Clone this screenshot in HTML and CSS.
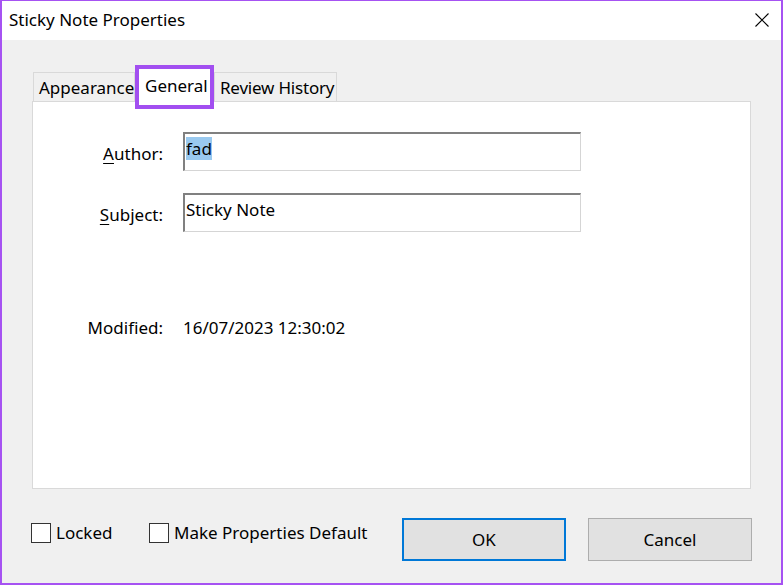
FILE: index.html
```html
<!DOCTYPE html>
<html>
<head>
<meta charset="utf-8">
<title>Sticky Note Properties</title>
<link rel="stylesheet" href="styles.css">
</head>
<body>
  <div class="window">
    <div class="titlebar">
      <span class="title">Sticky Note Properties</span>
      <button class="close" aria-label="Close">
        <svg width="16" height="16" viewBox="0 0 16 16">
          <path d="M1.5 1.5 L14.5 14.5 M14.5 1.5 L1.5 14.5" stroke="#000" stroke-width="1.1" fill="none"/>
        </svg>
      </button>
    </div>

    <div class="dialog-body">
      <div class="tabs">
        <div class="tab">Appearance</div>
        <div class="tab tab-active">General</div>
        <div class="tab">Review History</div>
      </div>

      <div class="panel">
        <div class="form-grid">
          <label class="field-label" for="author"><u>A</u>uthor:</label>
          <div class="text-field" id="author"><span class="selected">fad</span></div>

          <label class="field-label" for="subject"><u>S</u>ubject:</label>
          <div class="text-field" id="subject">Sticky Note</div>
        </div>

        <div class="modified-row">
          <span class="field-label">Modified:</span>
          <span class="modified-value">16/07/2023 12:30:02</span>
        </div>
      </div>

      <div class="footer">
        <div class="checks">
          <label class="check check-locked"><span class="box"></span>Locked</label>
          <label class="check"><span class="box"></span>Make Properties Default</label>
        </div>
        <div class="buttons">
          <button class="btn btn-default">OK</button>
          <button class="btn">Cancel</button>
        </div>
      </div>
    </div>
  </div>
</body>
</html>
```

FILE: styles.css
```css
/* Windows style property dialog */
* {
  box-sizing: border-box;
}

body {
  margin: 0;
  font-family: "Noto Sans", "Liberation Sans", sans-serif;
  font-size: 17px;
  color: #000;
  background: #f0f0f0;
}

.window {
  width: 783px;
  height: 585px;
  border: 2px solid #a652f2;
  border-top-width: 1px;
  background: #f0f0f0;
  display: flex;
  flex-direction: column;
}

.titlebar {
  height: 39px;
  background: #fff;
  display: flex;
  align-items: center;
  justify-content: space-between;
  padding-left: 7px;
  padding-right: 11px;
}

.title {
  font-size: 17px;
  margin-top: -2px;
}

.close {
  border: none;
  background: none;
  padding: 0;
  width: 16px;
  height: 16px;
  margin-top: -2px;
}

.close svg {
  display: block;
}

.dialog-body {
  flex: 1;
  padding: 0 29px 0 30px;
  display: flex;
  flex-direction: column;
}

/* tab strip */
.tabs {
  margin-top: 32px;
  height: 29px;
  display: flex;
  align-items: flex-end;
  padding-left: 1px;
}

.tab {
  height: 29px;
  border: 1px solid #d9d9d9;
  border-bottom: none;
  padding: 3px 0 0 5px;
  white-space: nowrap;
}

.tab:first-child {
  width: 102px;
}

.tab:last-child {
  width: 123px;
  letter-spacing: -0.2px;
}

.tab-active {
  position: relative;
  z-index: 1;
  width: 79px;
  height: 44px;
  margin-bottom: -8px;
  border: 4px solid #a24ff0;
  background: #fff;
  padding: 5px 0 0 6px;
}

/* white page */
.panel {
  height: 388px;
  margin-right: 1px;
  background: #fff;
  border: 1px solid #d9d9d9;
}

.form-grid {
  display: grid;
  grid-template-columns: 130px 398px;
  column-gap: 20px;
  row-gap: 22px;
  align-items: center;
  padding-top: 30px;
}

.field-label {
  text-align: right;
  padding-top: 3px;
}

.field-label u {
  text-decoration-thickness: 1px;
  text-underline-offset: 3px;
}

.text-field {
  height: 39px;
  border-top: 2px solid #808080;
  border-left: 2px solid #808080;
  border-right: 1px solid #d5d5d5;
  border-bottom: 1px solid #d5d5d5;
  padding: 3px 0 0 1px;
  line-height: 24px;
}

.selected {
  background: #99c9ef;
}

.modified-row {
  display: grid;
  grid-template-columns: 130px auto;
  column-gap: 20px;
  margin-top: 84px;
}

.modified-row .field-label {
  padding-top: 0;
}

/* bottom bar */
.footer {
  display: flex;
  align-items: flex-start;
  padding-top: 29px;
}

.checks {
  display: flex;
  margin-top: 3px;
  margin-left: -1px;
}

.check {
  display: flex;
  align-items: center;
  gap: 5px;
}

.check-locked {
  width: 118px;
}

.box {
  width: 20px;
  height: 20px;
  border: 1px solid #333;
  background: #fff;
}

.buttons {
  margin-left: auto;
  display: flex;
  gap: 22px;
}

.btn {
  width: 164px;
  height: 43px;
  font: inherit;
  color: #000;
  background: #e1e1e1;
  border: 1px solid #adadad;
  padding: 0;
}

.btn-default {
  border: 2px solid #0078d7;
}
```
